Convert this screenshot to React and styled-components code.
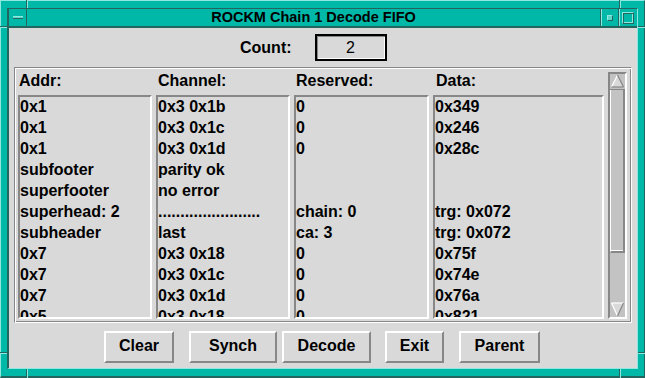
import React from "react";
import styled, { createGlobalStyle } from "styled-components";

const teal = "#00b8a8";
const tealLight = "#8ee8e0";
const tealDark = "#22665f";
const gray = "#d9d9d9";
const shade = "#878787";
const trough = "#c3c3c3";

const GlobalStyle = createGlobalStyle`
  html, body {
    margin: 0;
    padding: 0;
    background: ${teal};
  }
  body {
    font-family: "Liberation Sans", Arial, sans-serif;
    color: #000;
  }
`;

const Window = styled.div`
  position: relative;
  width: 645px;
  height: 378px;
  box-sizing: border-box;
  display: flex;
  background: ${teal};
  border-style: solid;
  border-width: 1px 1px 2px 1px;
  border-color: ${tealLight} ${tealDark} ${tealDark} ${tealLight};
  padding: 7px 6px 7px 6px;
`;

const Notch = styled.span`
  position: absolute;
  left: ${(p) => p.$x}px;
  top: ${(p) => p.$y}px;
  width: ${(p) => (p.$vertical ? 1 : p.$len)}px;
  height: ${(p) => (p.$vertical ? p.$len : 1)}px;
  background: ${tealDark};
  box-shadow: ${(p) => (p.$vertical ? `1px 0 0 ${tealLight}` : `0 1px 0 ${tealLight}`)};
`;

const Inner = styled.div`
  flex: 1;
  display: flex;
  flex-direction: column;
  border-style: solid;
  border-width: 1px 1px 1px 2px;
  border-color: ${tealDark} ${tealLight} ${tealLight} ${tealDark};
  min-width: 0;
`;

const TitleBar = styled.div`
  height: 19px;
  box-sizing: border-box;
  display: flex;
  border-bottom: 2px solid ${tealDark};
`;

const TitleButton = styled.div`
  width: ${(p) => p.$w}px;
  box-sizing: border-box;
  display: flex;
  align-items: center;
  justify-content: center;
  border-left: ${(p) => (p.$side === "right" ? `1px solid ${tealDark}` : "none")};
  border-right: ${(p) => (p.$side === "left" ? `1px solid ${tealDark}` : "none")};
  box-shadow: ${(p) => (p.$side === "right" ? `inset 1px 0 0 ${tealLight}` : "none")};
`;

const MenuBar = styled.span`
  width: 10px;
  height: 3px;
  box-sizing: border-box;
  background: #5fd6cb;
  border-top: 1px solid ${tealLight};
  border-bottom: 1px solid ${tealDark};
`;

const MinSquare = styled.span`
  width: 6px;
  height: 6px;
  box-sizing: border-box;
  background: #5fd6cb;
  border: 1px solid;
  border-color: ${tealLight} ${tealDark} ${tealDark} ${tealLight};
`;

const MaxSquare = styled.span`
  width: 12px;
  height: 12px;
  box-sizing: border-box;
  border: 1px solid;
  border-color: ${tealLight} ${tealDark} ${tealDark} ${tealLight};
  box-shadow: inset 1px 1px 0 ${tealDark}, inset -1px -1px 0 ${tealLight};
`;

const Title = styled.div`
  flex: 1;
  text-align: center;
  font-weight: bold;
  font-size: 14.5px;
  line-height: 17px;
  white-space: nowrap;
`;

const Body = styled.div`
  flex: 1;
  display: flex;
  flex-direction: column;
  background: ${gray};
`;

const CountRow = styled.div`
  display: flex;
  align-items: center;
  gap: 23px;
  margin-top: 6px;
  padding-left: 231px;
  height: 27px;
`;

const Label = styled.span`
  font-weight: bold;
  font-size: 16px;
`;

const Entry = styled.div`
  width: 72px;
  height: 27px;
  box-sizing: border-box;
  border: 2px solid #000;
  box-shadow: inset 1px 1px 0 ${shade}, inset -1px -1px 0 #fff;
  display: flex;
  align-items: center;
  justify-content: center;
  font-size: 16px;
`;

const Frame = styled.div`
  margin: 6px 5px 0 5px;
  height: 256px;
  box-sizing: border-box;
  border: 1px solid;
  border-color: ${shade} #fff #fff ${shade};
  box-shadow: inset 1px 1px 0 #fff, inset -1px -1px 0 ${shade};
  padding: 3px;
  display: grid;
  grid-template-columns: 134px 134px 135px 171px 19px;
  grid-template-rows: 24px 1fr;
  column-gap: 4px;
`;

const Header = styled.div`
  font-weight: bold;
  font-size: 16px;
  line-height: 19px;
  padding-left: ${(p) => p.$pad || 2}px;
  white-space: nowrap;
`;

const ListBox = styled.div`
  box-sizing: border-box;
  border: 2px solid;
  border-color: ${shade} #fff #fff ${shade};
  overflow: hidden;
  min-height: 0;
`;

const Rows = styled.div`
  margin-top: -1px;
`;

const Row = styled.div`
  height: 21px;
  line-height: 21px;
  font-weight: bold;
  font-size: 16px;
  white-space: nowrap;
`;

const ScrollBar = styled.div`
  grid-column: 5;
  grid-row: 1 / span 2;
  margin-top: 1px;
  box-sizing: border-box;
  border: 2px solid;
  border-color: ${shade} #fff #fff ${shade};
  background: ${trough};
  display: flex;
  flex-direction: column;
`;

const Arrow = styled.svg`
  display: block;
  flex: none;
`;

const Thumb = styled.div`
  height: 163px;
  box-sizing: border-box;
  border-left: 1px solid #fff;
  border-right: 2px solid ${shade};
  border-bottom: 2px solid ${shade};
  box-shadow: inset 0 -1px 0 #fff;
`;

const Trough = styled.div`
  flex: 1;
`;

const ButtonRow = styled.div`
  display: flex;
  margin-top: 8px;
  padding-left: 95px;
`;

const Button = styled.button`
  width: ${(p) => p.$w}px;
  height: 32px;
  margin: 0 0 0 ${(p) => p.$gap || 0}px;
  padding: 0 0 3px 0;
  box-sizing: border-box;
  background: ${gray};
  border: 2px solid;
  border-color: #fff ${shade} ${shade} #fff;
  font-family: "Liberation Sans", Arial, sans-serif;
  font-weight: bold;
  font-size: 16px;
  color: #000;
`;

const UpArrow = () => (
  <Arrow width="15" height="16" viewBox="0 0 15 16">
    <rect x="0" y="0" width="15" height="16" fill={trough} />
    <polygon points="7.5,1 1.5,13 13.5,13" fill={gray} />
    <line x1="7.5" y1="1" x2="1.5" y2="13" stroke="#fff" strokeWidth="1.2" />
    <line x1="7.5" y1="1" x2="13.5" y2="13" stroke={shade} strokeWidth="1.2" />
    <line x1="1.5" y1="13" x2="13.5" y2="13" stroke={shade} strokeWidth="1.2" />
    <line x1="0" y1="15.5" x2="15" y2="15.5" stroke={shade} strokeWidth="1" />
  </Arrow>
);

const DownArrow = () => (
  <Arrow width="15" height="16" viewBox="0 0 15 16">
    <rect x="0" y="0" width="15" height="16" fill={trough} />
    <polygon points="1.5,2 13.5,2 7.5,15" fill={gray} />
    <line x1="1.5" y1="2" x2="13.5" y2="2" stroke="#fff" strokeWidth="1.2" />
    <line x1="1.5" y1="2" x2="7.5" y2="15" stroke="#fff" strokeWidth="1.2" />
    <line x1="13.5" y1="2" x2="7.5" y2="15" stroke={shade} strokeWidth="1.2" />
  </Arrow>
);

const dots = ".".repeat(23);

const columns = [
  {
    title: "Addr:",
    pad: 1,
    rows: ["0x1", "0x1", "0x1", "subfooter", "superfooter", "superhead: 2", "subheader", "0x7", "0x7", "0x7", "0x5"],
  },
  {
    title: "Channel:",
    rows: ["0x3 0x1b", "0x3 0x1c", "0x3 0x1d", "parity ok", "no error", dots, "last", "0x3 0x18", "0x3 0x1c", "0x3 0x1d", "0x3 0x18"],
  },
  {
    title: "Reserved:",
    rows: ["0", "0", "0", "", "", "chain: 0", "ca: 3", "0", "0", "0", "0"],
  },
  {
    title: "Data:",
    pad: 3,
    rows: ["0x349", "0x246", "0x28c", "", "", "trg: 0x072", "trg: 0x072", "0x75f", "0x74e", "0x76a", "0x821"],
  },
];

const buttons = [
  { label: "Clear", w: 70, gap: 0 },
  { label: "Synch", w: 88, gap: 15 },
  { label: "Decode", w: 89, gap: 5 },
  { label: "Exit", w: 59, gap: 14 },
  { label: "Parent", w: 81, gap: 15 },
];

export default function App() {
  return (
    <>
      <GlobalStyle />
      <Window>
        <Notch $vertical $x={25} $y={-1} $len={8} />
        <Notch $vertical $x={618} $y={-1} $len={8} />
        <Notch $x={-1} $y={25} $len={7} />
        <Notch $x={637} $y={25} $len={7} />
        <Notch $x={-1} $y={351} $len={7} />
        <Notch $x={637} $y={351} $len={7} />
        <Notch $vertical $x={25} $y={368} $len={9} />
        <Notch $vertical $x={618} $y={368} $len={9} />
        <Inner>
          <TitleBar>
            <TitleButton $w={18} $side="left">
              <MenuBar />
            </TitleButton>
            <Title>ROCKM Chain 1 Decode FIFO</Title>
            <TitleButton $w={18} $side="right">
              <MinSquare />
            </TitleButton>
            <TitleButton $w={19} $side="right">
              <MaxSquare />
            </TitleButton>
          </TitleBar>
          <Body>
            <CountRow>
              <Label>Count:</Label>
              <Entry>2</Entry>
            </CountRow>
            <Frame>
              {columns.map((c) => (
                <Header key={c.title} $pad={c.pad}>
                  {c.title}
                </Header>
              ))}
              {columns.map((c) => (
                <ListBox key={c.title + "-list"}>
                  <Rows>
                    {c.rows.map((r, i) => (
                      <Row key={i}>{r}</Row>
                    ))}
                  </Rows>
                </ListBox>
              ))}
              <ScrollBar>
                <UpArrow />
                <Thumb />
                <Trough />
                <DownArrow />
              </ScrollBar>
            </Frame>
            <ButtonRow>
              {buttons.map((b) => (
                <Button key={b.label} $w={b.w} $gap={b.gap}>
                  {b.label}
                </Button>
              ))}
            </ButtonRow>
          </Body>
        </Inner>
      </Window>
    </>
  );
}
